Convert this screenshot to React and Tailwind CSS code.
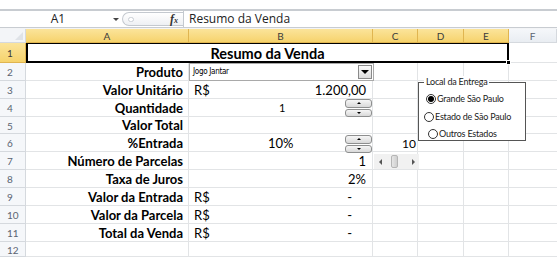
import React from 'react';

const cols = [
    { name: 'A', w: 'w-[163px]' },
    { name: 'B', w: 'w-[184px]' },
    { name: 'C', w: 'w-[45px]' },
    { name: 'D', w: 'w-[46px]' },
    { name: 'E', w: 'w-[45px]' },
];

const rows = [
    { n: 2, label: 'Produto' },
    { n: 3, label: 'Valor Unitário', rs: true, b: '1.200,00', bAlign: 'right' },
    { n: 4, label: 'Quantidade', b: '1', bAlign: 'qty' },
    { n: 5, label: 'Valor Total' },
    { n: 6, label: '%Entrada', b: '10%', bAlign: 'pct', c: '10' },
    { n: 7, label: 'Número de Parcelas', b: '1', bAlign: 'right' },
    { n: 8, label: 'Taxa de Juros', b: '2%', bAlign: 'right' },
    { n: 9, label: 'Valor da Entrada', rs: true, b: '-', bAlign: 'dash' },
    { n: 10, label: 'Valor da Parcela', rs: true, b: '-', bAlign: 'dash' },
    { n: 11, label: 'Total da Venda', rs: true, b: '-', bAlign: 'dash' },
];

const RowHeader = ({ n, sel }) => (
    <div
        className={
            'w-[26px] shrink-0 flex items-center pl-[7px] pt-[2px] text-[10px] border-r border-b ' +
            (sel
                ? 'bg-gradient-to-b from-[#fbe49a] to-[#f6d36c] border-[#e0b550] text-[#3b3b3b]'
                : 'bg-[#f5f7fa] border-[#d5d9de] text-[#5a6472]')
        }
    >
        {n}
    </div>
);

const Spinner = ({ top }) => (
    <div className={`absolute left-[345px] w-[27px] h-[18px] flex flex-col gap-[1px] ${top}`}>
        <div className="h-[8.5px] rounded-[3px] border border-[#8e8f8f] bg-gradient-to-b from-[#f6f6f6] to-[#d9d9d9] flex items-center justify-center">
            <div className="w-0 h-0 border-l-[2px] border-r-[2px] border-b-[2px] border-l-transparent border-r-transparent border-b-black" />
        </div>
        <div className="h-[8.5px] rounded-[3px] border border-[#8e8f8f] bg-gradient-to-b from-[#f6f6f6] to-[#d9d9d9] flex items-center justify-center">
            <div className="w-0 h-0 border-l-[2px] border-r-[2px] border-t-[2px] border-l-transparent border-r-transparent border-t-black" />
        </div>
    </div>
);

const Radio = ({ checked, label, className }) => (
    <div className={`flex items-center gap-[1px] ${className}`}>
        <div className="w-[10px] h-[10px] rounded-full border border-[#333] bg-white flex items-center justify-center">
            {checked && <div className="w-[6px] h-[6px] rounded-full bg-black" />}
        </div>
        <span className="text-[9px] tracking-[-0.2px] text-[#222]">{label}</span>
    </div>
);

const App = () => {
    return (
        <div className="relative w-[557px] h-[266px] bg-white overflow-hidden font-['Lato',sans-serif] text-black">
            {/* top strip */}
            <div className="h-[9px] bg-white" />

            {/* formula bar */}
            <div className="h-[19px] flex border-t-2 border-b border-[#c8ccd1] bg-white">
                <div className="w-[110px] flex items-center justify-center pl-[6px] text-[12px] font-['Open_Sans',sans-serif] text-[#222]">
                    A1
                </div>
                <div className="w-[12px] flex items-center justify-center">
                    <div className="w-0 h-0 border-l-[3px] border-r-[3px] border-t-[3px] border-l-transparent border-r-transparent border-t-[#444]" />
                </div>
                <div className="w-[61px] my-[1px] flex items-center rounded-l-full border-l border-y border-[#c4c9cf] bg-gradient-to-b from-white to-[#eef0f3]">
                    <div className="ml-[5px] w-[6px] h-[5px] rounded-full border border-[#c9ced4] bg-white" />
                    <span className="ml-auto mr-[5px] italic font-bold font-['Liberation_Serif',serif] text-[12px] text-[#333]">
                        f<span className="text-[8px]">x</span>
                    </span>
                </div>
                <div className="flex-1 flex items-center pl-[5px] border-l border-[#c4c9cf] text-[12px] font-['Open_Sans',sans-serif] text-[#222]">
                    Resumo da Venda
                </div>
            </div>

            <div className="h-[1px] bg-[#f3f4f6]" />

            {/* column headers */}
            <div className="h-[14px] flex text-[10px] leading-none">
                <div className="w-[26px] shrink-0 bg-[#f3f5f8] border-r border-b border-[#d5d9de] flex items-end justify-end p-[2px]">
                    <div className="w-0 h-0 border-l-[8px] border-b-[8px] border-l-transparent border-b-[#dfe3e8]" />
                </div>
                {cols.map((c) => (
                    <div
                        key={c.name}
                        className={`${c.w} shrink-0 flex items-center justify-center border-r border-b border-[#e0b550] bg-gradient-to-b from-[#fbe49a] to-[#f6d36c] text-[#3b3b3b]`}
                    >
                        {c.name}
                    </div>
                ))}
                <div className="flex-1 flex items-center justify-center border-b border-r border-[#d5d9de] bg-gradient-to-b from-[#f5f7fa] to-[#e9edf2] text-[#5a6472]">
                    F
                </div>
            </div>

            {/* row 1 */}
            <div className="h-[20px] flex">
                <RowHeader n={1} sel />
                <div className="w-[483px] shrink-0 border-2 border-t border-black flex items-center justify-center text-[14.5px] font-bold pt-[2px]">
                    Resumo da Venda
                </div>
                <div className="flex-1 border-b border-[#e2e4e6]" />
            </div>

            {/* rows 2-11 */}
            {rows.map((r) => (
                <div key={r.n} className={`flex ${r.n === 5 ? 'h-[17px]' : 'h-[18px]'}`}>
                    <RowHeader n={r.n} />
                    <div className="w-[163px] shrink-0 border-r border-b border-[#e2e4e6] flex items-center justify-end pr-[5px] pt-[2px] text-[13px] font-bold">
                        {r.label}
                    </div>
                    <div className="w-[184px] shrink-0 border-r border-b border-[#e2e4e6] flex items-center pt-[2px] text-[13px] relative">
                        {r.rs && <span className="absolute left-[5px]">R$</span>}
                        {r.bAlign === 'right' && <span className="absolute right-[6px]">{r.b}</span>}
                        {r.bAlign === 'dash' && <span className="absolute right-[20px]">{r.b}</span>}
                        {r.bAlign === 'qty' && <span className="absolute left-[90px] text-[11px]">{r.b}</span>}
                        {r.bAlign === 'pct' && <span className="absolute left-[79px]">{r.b}</span>}
                    </div>
                    <div className="w-[45px] shrink-0 border-r border-b border-[#e2e4e6] flex items-center justify-end pr-[1px] pt-[2px] text-[12px]">
                        {r.c}
                    </div>
                    <div className="w-[46px] shrink-0 border-r border-b border-[#e2e4e6]" />
                    <div className="w-[45px] shrink-0 border-r border-b border-[#e2e4e6]" />
                    <div className="flex-1 border-b border-[#e2e4e6]" />
                </div>
            ))}

            {/* row 12 */}
            <div className="h-[15px] flex">
                <RowHeader n={12} />
                <div className="w-[163px] shrink-0 border-r border-b border-[#e2e4e6]" />
                <div className="w-[184px] shrink-0 border-r border-b border-[#e2e4e6]" />
                <div className="w-[45px] shrink-0 border-r border-b border-[#e2e4e6]" />
                <div className="w-[46px] shrink-0 border-r border-b border-[#e2e4e6]" />
                <div className="w-[45px] shrink-0 border-r border-b border-[#e2e4e6]" />
                <div className="flex-1 border-b border-[#e2e4e6]" />
            </div>
            <div className="h-[9px] bg-white" />

            {/* fill handle */}
            <div className="absolute left-[506px] top-[60px] w-[5px] h-[5px] bg-black border border-white" />

            {/* combo box */}
            <div className="absolute left-[189px] top-[63px] w-[185px] h-[18px] bg-white border border-[#a9a9a9] flex items-center">
                <span className="pl-[3px] text-[8px] font-['DejaVu_Sans_Condensed',sans-serif] tracking-[-0.3px]">Jogo Jantar</span>
                <div className="ml-auto mr-[1px] w-[14px] h-[14px] border border-[#8a8a8a] bg-gradient-to-b from-[#fbfbfb] to-[#dcdcdc] flex items-center justify-center">
                    <div className="w-0 h-0 border-l-[4px] border-r-[4px] border-t-[4px] border-l-transparent border-r-transparent border-t-black" />
                </div>
            </div>

            <Spinner top="top-[99px]" />
            <Spinner top="top-[135px]" />

            {/* scroll bar */}
            <div className="absolute left-[374px] top-[154px] w-[45px] h-[15px] bg-[#f1f1f1] flex items-center">
                <div className="w-[12px] flex justify-center">
                    <div className="w-0 h-0 border-t-[3px] border-b-[3px] border-r-[3px] border-t-transparent border-b-transparent border-r-[#555]" />
                </div>
                <div className="ml-[5px] w-[7px] h-[13px] rounded-[2px] border border-[#b5b5b5] bg-gradient-to-r from-[#e6e6e6] to-[#cfcfcf]" />
                <div className="ml-auto w-[12px] flex justify-center">
                    <div className="w-0 h-0 border-t-[3px] border-b-[3px] border-l-[3px] border-t-transparent border-b-transparent border-l-[#555]" />
                </div>
            </div>

            {/* group box */}
            <div className="absolute left-[418px] top-[82px] w-[108px] h-[59px] border border-[#555] bg-white">
                <span className="absolute left-[5px] top-[-7px] px-[2px] bg-white text-[9px] tracking-[-0.2px] text-[#222] leading-[12px]">
                    Local da Entrega
                </span>
                <Radio checked label="Grande São Paulo" className="absolute left-[7px] top-[9px]" />
                <Radio label="Estado de São Paulo" className="absolute left-[5px] top-[27px]" />
                <Radio label="Outros Estados" className="absolute left-[9px] top-[44px]" />
            </div>
        </div>
    );
};

export default App;
